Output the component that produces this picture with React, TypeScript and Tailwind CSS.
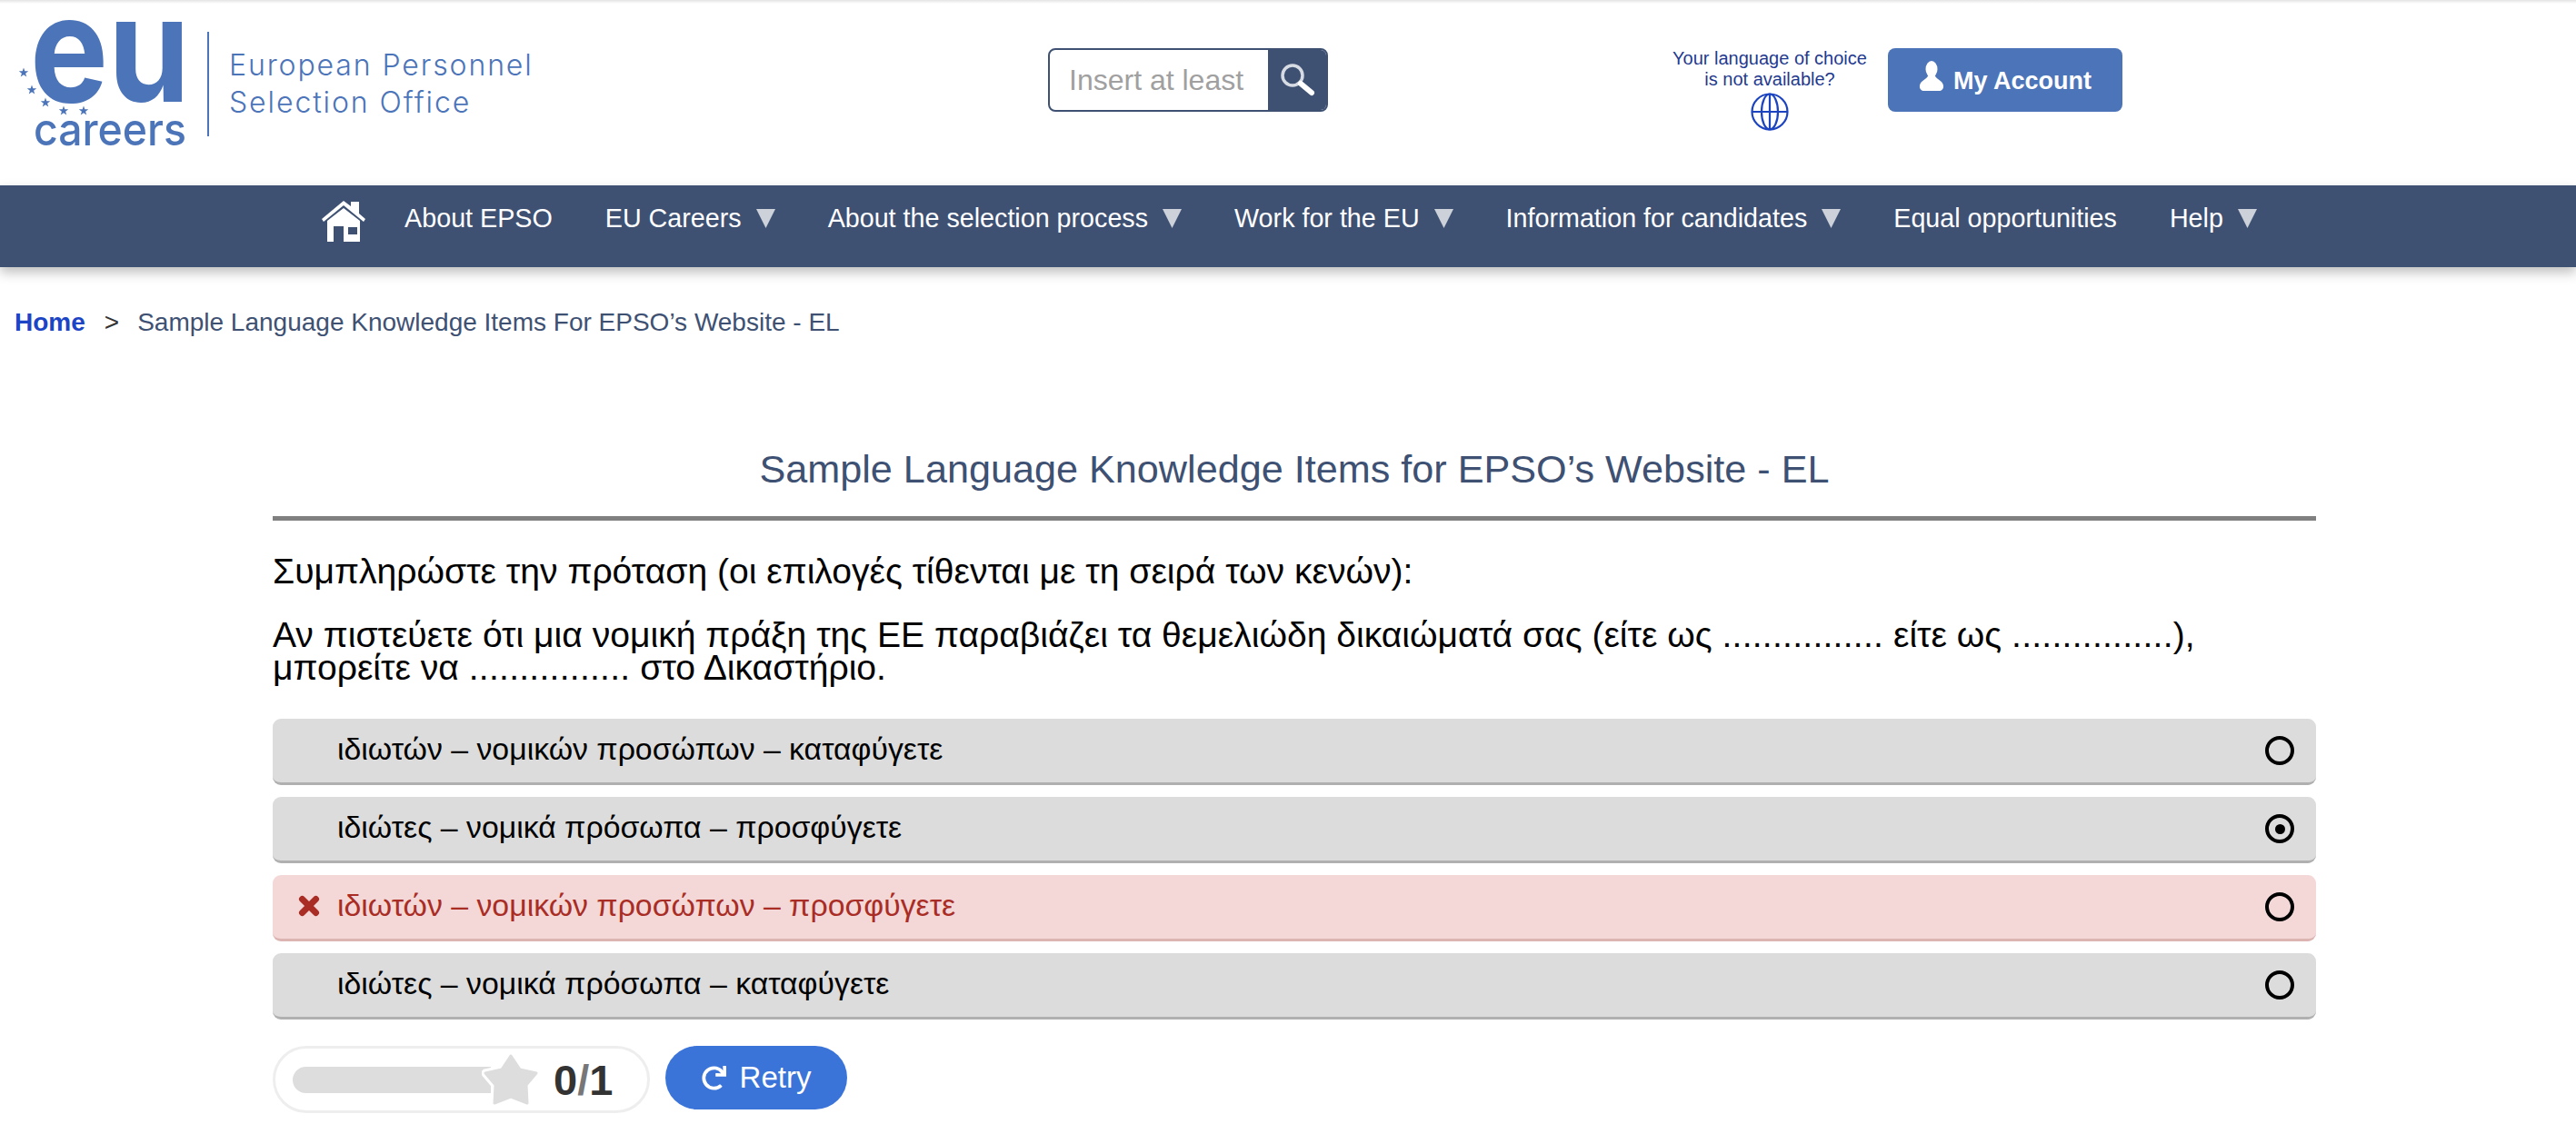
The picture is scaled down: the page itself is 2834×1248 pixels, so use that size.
import { FaRedo } from "react-icons/fa"

const font = "font-['Liberation_Sans',Arial,sans-serif]"

const navItems = [
  { label: "About EPSO", arrow: false },
  { label: "EU Careers", arrow: true },
  { label: "About the selection process", arrow: true },
  { label: "Work for the EU", arrow: true },
  { label: "Information for candidates", arrow: true },
  { label: "Equal opportunities", arrow: false },
  { label: "Help", arrow: true },
]

const options = [
  { text: "ιδιωτών – νομικών προσώπων – καταφύγετε", checked: false, wrong: false },
  { text: "ιδιώτες – νομικά πρόσωπα – προσφύγετε", checked: true, wrong: false },
  { text: "ιδιωτών – νομικών προσώπων – προσφύγετε", checked: false, wrong: true },
  { text: "ιδιώτες – νομικά πρόσωπα – καταφύγετε", checked: false, wrong: false },
]

function Logo() {
  const stars = [
    [26, 76],
    [35, 95],
    [50, 109],
    [70, 118],
    [92, 118],
  ]
  return (
    <svg width="210" height="170" viewBox="0 0 210 170" className="shrink-0 overflow-visible">
      <text x="33" y="108" textLength="176" lengthAdjust="spacingAndGlyphs" fontSize="162" fontWeight="700" fill="#4c74b9" fontFamily="Inter, sans-serif">
        eu
      </text>
      <text x="37" y="156" textLength="168" lengthAdjust="spacingAndGlyphs" fontSize="50" fontWeight="500" fill="#4c74b9" fontFamily="Inter, sans-serif">
        careers
      </text>
      {stars.map(([x, y]) => (
        <polygon
          key={x}
          transform={`translate(${x} ${y}) scale(5.5)`}
          points="0,-1 0.24,-0.31 0.95,-0.31 0.38,0.12 0.59,0.81 0,0.4 -0.59,0.81 -0.38,0.12 -0.95,-0.31 -0.24,-0.31"
          fill="#4c74b9"
        />
      ))}
    </svg>
  )
}

function HomeIcon() {
  return (
    <svg width="50" height="46" viewBox="0 0 50 46" fill="#fff" className="-mr-[16px] shrink-0">
      <path d="M1 21 L25 1 L33 7 V2 H42 V15 L49 21 L47 24 L25 6 L3 24 Z" />
      <path fillRule="evenodd" d="M7 23 L25 9 L43 23 V46 H7 Z M14 29 V46 H25 V29 Z M30 30 V38 H40 V30 Z" />
    </svg>
  )
}

function SearchIcon() {
  return (
    <svg width="40" height="38" viewBox="0 0 40 38" fill="none">
      <circle cx="15" cy="14" r="11" stroke="#d7dbe3" strokeWidth="3.5" />
      <path d="M24 23 L36 33" stroke="#fff" strokeWidth="6" strokeLinecap="round" />
    </svg>
  )
}

function PersonIcon() {
  return (
    <svg width="28" height="33" viewBox="0 0 28 33" fill="#fff" className="-mt-[10px] shrink-0">
      <ellipse cx="14" cy="9" rx="6.5" ry="9" />
      <path d="M10.5 15 H17.5 C18 20 26 21 27 27 C27.5 31 25 33 22 33 H6 C3 33 0.5 31 1 27 C2 21 10 20 10.5 15 Z" />
    </svg>
  )
}

function GlobeIcon() {
  return (
    <svg width="42" height="42" viewBox="0 0 42 42" fill="none" stroke="#1c44c0" strokeWidth="2.2">
      <circle cx="21" cy="21" r="19.5" />
      <ellipse cx="21" cy="21" rx="9" ry="19.5" />
      <path d="M1.5 21 H40.5 M21 1.5 V40.5" />
    </svg>
  )
}

function CrossIcon() {
  return (
    <svg width="24" height="24" viewBox="0 0 24 24" stroke="#a92d25" strokeWidth="7" strokeLinecap="round">
      <path d="M4.5 4.5 L19.5 19.5 M19.5 4.5 L4.5 19.5" />
    </svg>
  )
}

function Radio({ checked }: { checked: boolean }) {
  return (
    <span className="flex h-[32px] w-[32px] shrink-0 items-center justify-center rounded-full border-[4px] border-black">
      {checked && <span className="h-[11px] w-[11px] rounded-full bg-black" />}
    </span>
  )
}

function Option({ text, checked, wrong }: { text: string; checked: boolean; wrong: boolean }) {
  return (
    <div
      className={`flex h-[73px] items-center rounded-[9px] border-b-[3px] pr-[24px] text-[33.8px] ${
        wrong ? "border-[#dcb4b2] bg-[#f4d8d8] text-[#a92d25]" : "border-[#b0b0b0] bg-[#dcdcdc] text-black"
      }`}
    >
      <span className="flex w-[71px] shrink-0 justify-end pb-[3px] pr-[19px]">{wrong && <CrossIcon />}</span>
      <span className="flex-1 pb-[3px]">{text}</span>
      <Radio checked={checked} />
    </div>
  )
}

export default function App() {
  return (
    <div className={`h-[1248px] w-full overflow-hidden bg-white ${font}`}>
      <div className="h-[4px] bg-gradient-to-b from-[#e4e4e4] to-white" />
      <header className="flex h-[200px] items-start">
        <div className="flex w-[1153px] shrink-0 items-start">
          <Logo />
          <div className="ml-[18px] mt-[31px] h-[115px] w-[2px] bg-[#4c74b9]" />
          <div className="ml-[22px] mt-[47px] font-['Inter',sans-serif] text-[32px] font-light leading-[41px] tracking-[1.9px] text-[#4c74b9]">
            <div>European Personnel</div>
            <div>Selection Office</div>
          </div>
        </div>
        <div className="mt-[49px] flex h-[70px] w-[308px] shrink-0 overflow-hidden rounded-[8px] border-2 border-[#3e5173]">
          <div className="flex flex-1 items-center pl-[21px] text-[32px] text-[#a0a0a0]">Insert at least</div>
          <div className="flex w-[64px] items-center justify-center bg-[#3e5173]">
            <SearchIcon />
          </div>
        </div>
        <div className="ml-[366px] mt-[49px] flex w-[240px] shrink-0 flex-col items-center text-center text-[20px] leading-[23px] text-[#1f3a8f]">
          <div>Your language of choice</div>
          <div>is not available?</div>
          <div className="mt-[3px]">
            <GlobeIcon />
          </div>
        </div>
        <div className="ml-[10px] mt-[49px] flex h-[70px] w-[258px] shrink-0 items-center justify-center gap-[10px] rounded-[8px] bg-[#4c74b9] text-[27px] font-bold text-white">
          <PersonIcon />
          <span className="mt-[2px]">My Account</span>
        </div>
      </header>

      <nav className="flex h-[90px] items-start justify-center gap-[58px] bg-[#3e5173] pl-[2px] pt-[16px] text-[28.7px] leading-[40px] text-white shadow-[0_6px_12px_rgba(0,0,0,0.25)]">
        <HomeIcon />
        {navItems.map((item) => (
          <div key={item.label} className="flex items-center gap-[16px]">
            <span>{item.label}</span>
            {item.arrow && (
              <svg width="21" height="21" viewBox="0 0 21 21" className="shrink-0">
                <polygon points="0,0 21,0 10.5,21" fill="#cdd1da" />
              </svg>
            )}
          </div>
        ))}
      </nav>

      <div className="mt-[45px] flex items-center pl-[16px] text-[28px] leading-[32px] text-[#3e5173]">
        <span className="font-bold text-[#1b45c4]">Home</span>
        <span className="ml-[21px] text-[#333]">&gt;</span>
        <span className="ml-[20px]">Sample Language Knowledge Items For EPSO’s Website - EL</span>
      </div>

      <main className="ml-[300px] mt-[121px] w-[2248px]">
        <h1 className="border-b-[5px] border-[#808080] pb-[28px] text-center text-[43.2px] font-normal leading-[48px] text-[#3e5173]">
          Sample Language Knowledge Items for EPSO’s Website - EL
        </h1>
        <div className="mt-[38px] text-[39.1px] leading-[36px] text-black">
          <p>Συμπληρώστε την πρόταση (οι επιλογές τίθενται με τη σειρά των κενών):</p>
          <p className="mt-[34px]">
            Αν πιστεύετε ότι μια νομική πράξη της ΕΕ παραβιάζει τα θεμελιώδη δικαιώματά σας (είτε ως{" "}
            <span className="tracking-[0.25px]">................</span> είτε ως{" "}
            <span className="tracking-[0.25px]">................</span>),
            <br />
            μπορείτε να <span className="tracking-[0.25px]">................</span> στο Δικαστήριο.
          </p>
        </div>
        <div className="mt-[38px] flex flex-col gap-[13px]">
          {options.map((o) => (
            <Option key={o.text} {...o} />
          ))}
        </div>
        <div className="mt-[29px] flex items-start gap-[17px]">
          <div className="flex h-[74px] w-[415px] items-center rounded-full border-[3px] border-[#eeeeee] pl-[19px]">
            <div className="h-[29px] w-[218px] rounded-l-full bg-[#dddddd]" />
            <svg width="64" height="62" viewBox="0 0 64 62" className="-ml-[10px] shrink-0">
              <path
                d="M32 5 L42 20 L60 24 L49 37 L50 57 L32 50 L14 57 L15 37 L4 24 L22 20 Z"
                fill="#dddddd"
                stroke="#ffffff"
                strokeWidth="9"
                strokeLinejoin="round"
                paintOrder="stroke"
              />
              <path
                d="M32 5 L42 20 L60 24 L49 37 L50 57 L32 50 L14 57 L15 37 L4 24 L22 20 Z"
                fill="#dddddd"
                stroke="#dddddd"
                strokeWidth="3"
                strokeLinejoin="round"
              />
            </svg>
            <span className="ml-[15px] text-[47px] font-bold leading-none text-[#333]">
              0<span className="text-[#777]">/</span>1
            </span>
          </div>
          <div className="flex h-[70px] w-[200px] items-center justify-center gap-[15px] rounded-full bg-[#3b74d8] text-[33px] text-white">
            <FaRedo className="text-[27px]" />
            <span>Retry</span>
          </div>
        </div>
      </main>
    </div>
  )
}
